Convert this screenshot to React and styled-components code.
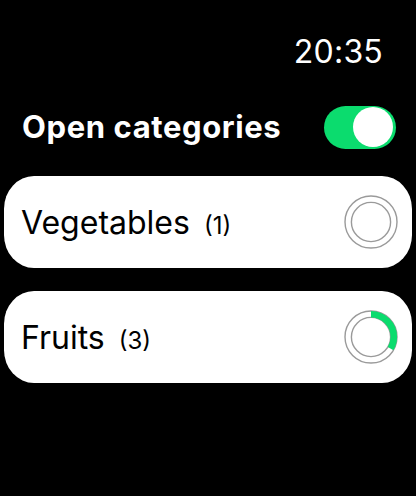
import React from "react";
import styled, { createGlobalStyle } from "styled-components";

const Global = createGlobalStyle`
  html, body { margin: 0; padding: 0; background: #000; }
  body { font-family: Inter, "Noto Sans", sans-serif; color: #fff; }
`;

const Screen = styled.div`
  width: 416px;
  height: 496px;
  background: #000;
  display: flex;
  flex-direction: column;
`;

const StatusBar = styled.div`
  display: flex;
  justify-content: flex-end;
  padding: 32px 33px 0 0;
  height: 40px;
`;

const Time = styled.span`
  font-size: 32px;
  font-weight: 400;
  line-height: 40px;
  letter-spacing: 0.2px;
`;

const Header = styled.div`
  display: flex;
  align-items: center;
  justify-content: space-between;
  padding: 33px 20px 0 22px;
  height: 44px;
`;

const Title = styled.h1`
  margin: 0;
  font-size: 31px;
  font-weight: 700;
  line-height: 44px;
  letter-spacing: 0.6px;
`;

const Toggle = styled.div`
  width: 72px;
  height: 43px;
  border-radius: 22px;
  background: ${(p) => (p.$on ? "#0bdc6e" : "#333")};
  display: flex;
  align-items: center;
  justify-content: ${(p) => (p.$on ? "flex-end" : "flex-start")};
  padding: 0 3px;
  box-sizing: border-box;
`;

const Knob = styled.div`
  width: 40px;
  height: 40px;
  border-radius: 50%;
  background: #fff;
`;

const List = styled.div`
  display: flex;
  flex-direction: column;
  gap: 23px;
  padding: 27px 4px 0 4px;
`;

const Card = styled.div`
  height: 92px;
  background: #fff;
  border-radius: 30px / 33px;
  display: flex;
  align-items: center;
  justify-content: space-between;
  padding: 0 14px 0 17px;
  color: #000;
`;

const Label = styled.div`
  display: flex;
  align-items: baseline;
  gap: 14px;
`;

const Name = styled.span`
  font-size: 32px;
  font-weight: 400;
`;

const Count = styled.span`
  font-size: 24px;
  font-weight: 400;
`;

function Ring({ fraction }) {
  const r = 22.8;
  const c = 2 * Math.PI * r;
  return (
    <svg width="54" height="54" viewBox="0 0 54 54">
      <circle cx="27" cy="27" r="26" fill="none" stroke="#9a9a9a" strokeWidth="1.4" />
      <circle cx="27" cy="27" r="19.6" fill="none" stroke="#9a9a9a" strokeWidth="1.4" />
      {fraction > 0 && (
        <circle
          cx="27"
          cy="27"
          r={r}
          fill="none"
          stroke="#0bdc6e"
          strokeWidth="6.6"
          strokeDasharray={`${c * fraction} ${c}`}
          transform="rotate(-90 27 27)"
        />
      )}
    </svg>
  );
}

const items = [
  { name: "Vegetables", count: 1, fraction: 0 },
  { name: "Fruits", count: 3, fraction: 1 / 3 },
];

export default function App() {
  return (
    <Screen>
      <Global />
      <StatusBar>
        <Time>20:35</Time>
      </StatusBar>
      <Header>
        <Title>Open categories</Title>
        <Toggle $on>
          <Knob />
        </Toggle>
      </Header>
      <List>
        {items.map((it) => (
          <Card key={it.name}>
            <Label>
              <Name>{it.name}</Name>
              <Count>({it.count})</Count>
            </Label>
            <Ring fraction={it.fraction} />
          </Card>
        ))}
      </List>
    </Screen>
  );
}
